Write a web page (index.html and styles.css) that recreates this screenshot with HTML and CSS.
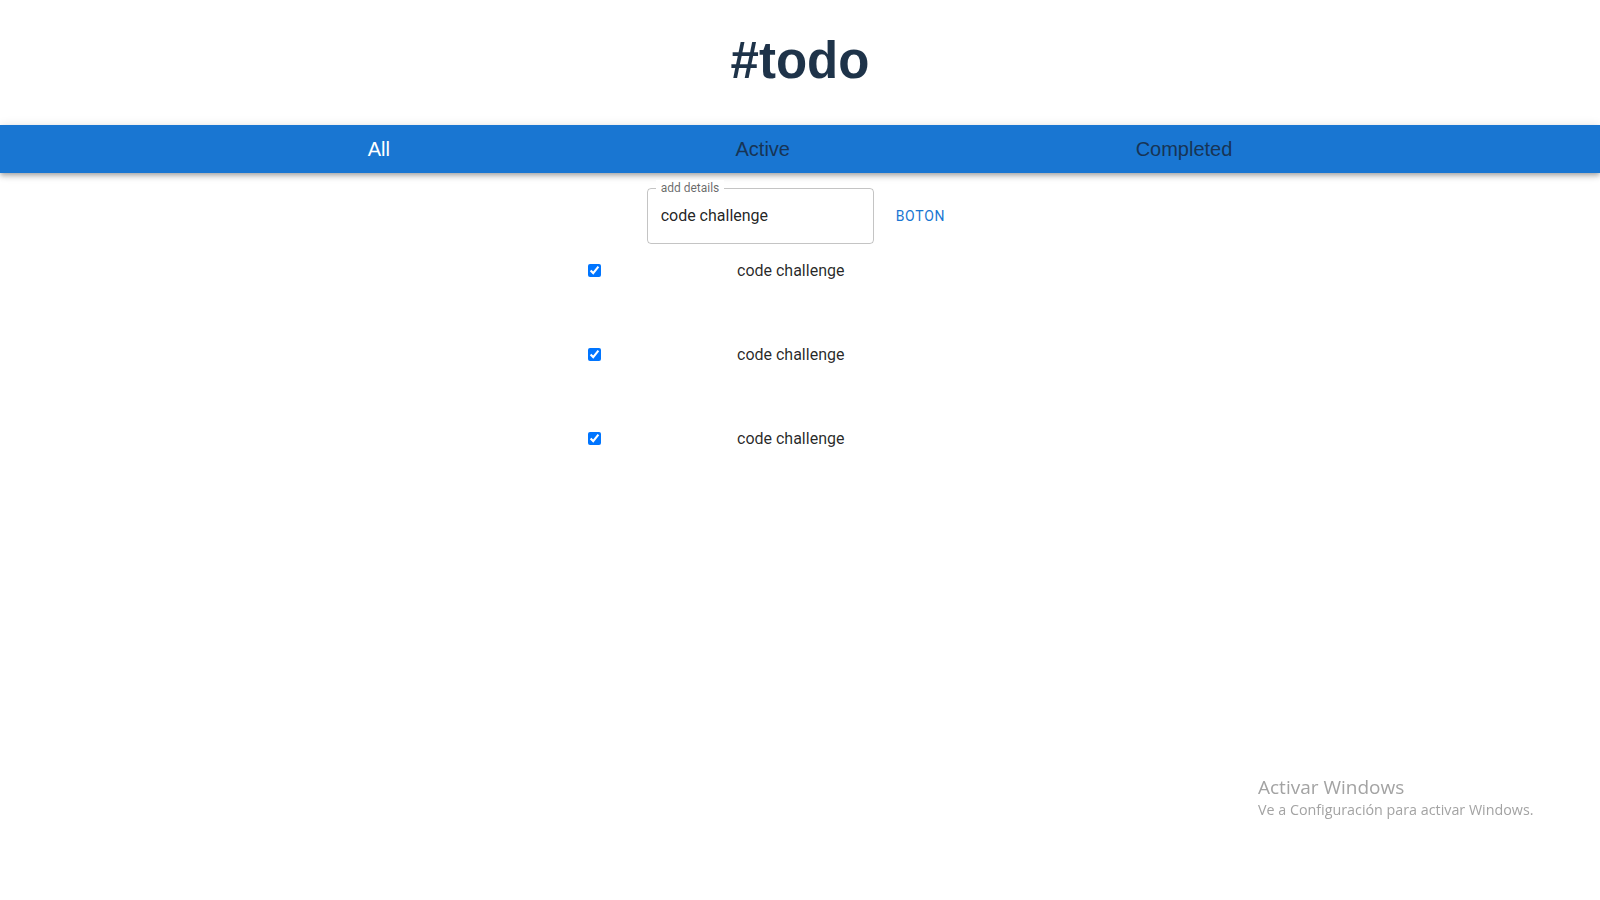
FILE: index.html
```html
<!DOCTYPE html>
<html lang="es">
<head>
<meta charset="utf-8">
<title>#todo</title>
<link rel="stylesheet" href="styles.css">
</head>
<body>
  <header class="header">
    <h1 class="title">#todo</h1>
  </header>
  <nav class="tabs">
    <span class="tab tab-active">All</span>
    <span class="tab">Active</span>
    <span class="tab">Completed</span>
  </nav>
  <main class="main">
    <form class="add-row">
      <div class="field">
        <span class="field-label">add details</span>
        <input class="field-input" type="text" value="code challenge">
      </div>
      <button class="btn" type="button">Boton</button>
    </form>
    <ul class="list">
      <li class="item"><input class="check" type="checkbox" checked><span class="item-text">code challenge</span></li>
      <li class="item"><input class="check" type="checkbox" checked><span class="item-text">code challenge</span></li>
      <li class="item"><input class="check" type="checkbox" checked><span class="item-text">code challenge</span></li>
    </ul>
  </main>
  <div class="watermark">
    <div class="wm-title">Activar Windows</div>
    <div class="wm-sub">Ve a Configuración para activar Windows.</div>
  </div>
</body>
</html>
```
FILE: styles.css
```css
* { box-sizing: border-box; }
html, body { margin: 0; padding: 0; background: #fff; }
body { font-family: Roboto, "Liberation Sans", Arial, sans-serif; }

.header { padding-top: 31px; display: flex; justify-content: center; }
.title {
  margin: 0;
  font-family: "Liberation Sans", Arial, sans-serif;
  font-weight: 700;
  font-size: 51px;
  line-height: 60px;
  color: #1e3349;
}

.tabs {
  margin-top: 34px;
  height: 48px;
  background: #1976d2;
  display: flex;
  align-items: center;
  justify-content: space-evenly;
  padding: 0 22px;
  box-shadow: 0px 2px 4px -1px rgba(0,0,0,0.2), 0px 4px 5px 0px rgba(0,0,0,0.14), 0px 1px 10px 0px rgba(0,0,0,0.12);
  position: relative;
}
.tab {
  font-family: "Liberation Sans", Arial, sans-serif;
  font-size: 20px;
  line-height: 23px;
  color: #173455;
}
.tab-active { color: #fff; }

.main { display: flex; flex-direction: column; align-items: center; }

.add-row {
  margin: 15px 0 0;
  display: flex;
  align-items: center;
  gap: 14px;
}
.field {
  position: relative;
  width: 227px;
  height: 56px;
  border: 1px solid rgba(0,0,0,0.23);
  border-radius: 4px;
}
.field-label {
  position: absolute;
  left: 8px;
  top: -9px;
  padding: 0 5px;
  background: #fff;
  font-size: 12px;
  line-height: 16px;
  color: rgba(0,0,0,0.6);
}
.field-input {
  display: block;
  width: 100%;
  height: 100%;
  border: 0;
  outline: 0;
  background: transparent;
  padding: 0 13px 2px;
  font-family: Roboto, sans-serif;
  font-size: 16px;
  color: rgba(0,0,0,0.87);
}
.btn {
  border: 0;
  background: transparent;
  padding: 6px 8px;
  font-family: Roboto, sans-serif;
  font-weight: 400;
  font-size: 14px;
  line-height: 24px;
  letter-spacing: 0.75px;
  text-transform: uppercase;
  color: #1976d2;
  border-radius: 4px;
}

.list {
  list-style: none;
  margin: 0;
  padding: 14px 0 0;
  width: 424px;
  display: flex;
  flex-direction: column;
  gap: 60px;
}
.item {
  height: 24px;
  display: flex;
  align-items: center;
  gap: 136px;
}
.check {
  margin: 0;
  width: 13px;
  height: 13px;
}
.item-text {
  font-size: 16px;
  color: rgba(0,0,0,0.85);
}

.watermark {
  position: fixed;
  left: 1258px;
  top: 775px;
  font-family: "Open Sans", "Noto Sans", sans-serif;
  color: #a3a3a3;
}
.wm-title { font-size: 19px; line-height: 25px; }
.wm-sub { font-size: 14.3px; line-height: 20px; }
```
